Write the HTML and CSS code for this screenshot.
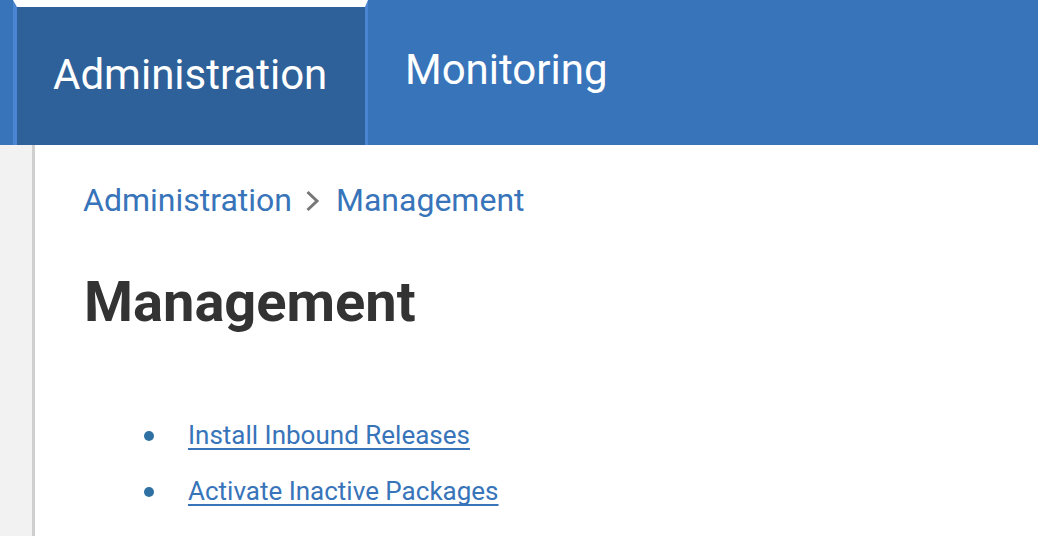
FILE: index.html
```html
<!DOCTYPE html>
<html>
<head>
<meta charset="utf-8">
<link rel="stylesheet" href="styles.css">
</head>
<body>
<nav class="topnav">
  <a class="tab tab-active" href="#">Administration</a>
  <a class="tab tab-plain" href="#">Monitoring</a>
</nav>
<div class="page">
  <aside class="sidebar"></aside>
  <main class="content">
    <div class="breadcrumb">
      <a href="#">Administration</a>
      <svg class="chev" width="15" height="22" viewBox="0 0 15 22"><path d="M2.5 2 L12 11 L2.5 20" fill="none" stroke="#777777" stroke-width="3"/></svg>
      <a href="#">Management</a>
    </div>
    <h1 class="title">Management</h1>
    <ul class="links">
      <li><a href="#">Install Inbound Releases</a></li>
      <li><a href="#">Activate Inactive Packages</a></li>
    </ul>
  </main>
</div>
</body>
</html>
```

FILE: styles.css
```css
html, body {
  margin: 0;
  padding: 0;
  background: #ffffff;
  font-family: Roboto, "Liberation Sans", Arial, sans-serif;
}
.topnav {
  display: flex;
  height: 145px;
  background: #3874ba;
  padding-left: 13px;
}
.tab {
  display: flex;
  align-items: center;
  color: #ffffff;
  text-decoration: none;
  font-size: 42px;
  box-sizing: border-box;
}
.tab-active {
  width: 355px;
  background: #2e6199;
  border-top: 7px solid #ffffff;
  border-left: 4px solid #4a85d2;
  border-right: 3px solid #4a85d2;
  padding: 0 0 4px 36px;
}
.tab-plain {
  padding: 0 0 6px 37px;
}
.page {
  display: flex;
  min-height: 391px;
}
.sidebar {
  width: 32px;
  background: #f2f2f2;
  border-right: 3px solid #cfcfcf;
}
.content {
  flex: 1;
  padding: 26px 0 0 48px;
}
.breadcrumb {
  display: flex;
  align-items: center;
  font-size: 32px;
  height: 58px;
}
.breadcrumb a {
  color: #3874ba;
  text-decoration: none;
}
.chev {
  margin: 2px 16px 0 13px;
}
.title {
  margin: 40px 0 0 1px;
  font-size: 56px;
  font-weight: 700;
  color: #333333;
  line-height: 66px;
}
.links {
  list-style: none;
  margin: 72px 0 0 0;
  padding-left: 61px;
  font-size: 26px;
  line-height: 56px;
}
.links li {
  display: flex;
  align-items: center;
}
.links li::before {
  content: "";
  width: 10px;
  height: 10px;
  border-radius: 50%;
  background: #2f71a4;
  margin-right: 34px;
  margin-top: 2px;
}
.links a {
  color: #3874ba;
  text-decoration: underline;
  text-decoration-thickness: 2px;
  text-underline-offset: 4px;
  text-decoration-skip-ink: none;
}
```
